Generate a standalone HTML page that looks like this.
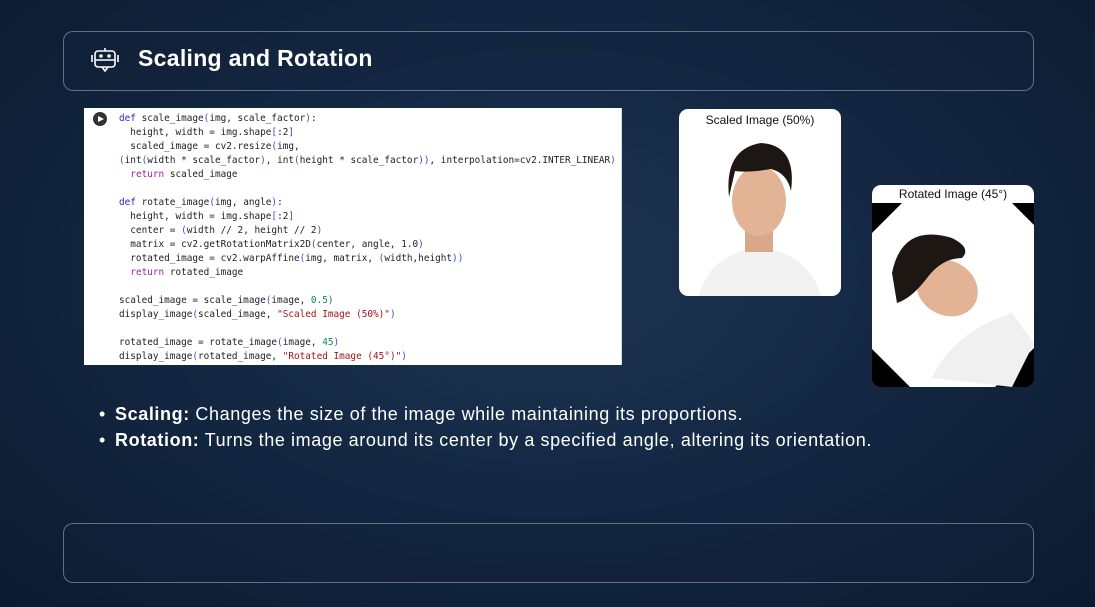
<!DOCTYPE html>
<html><head><meta charset="utf-8"><style>
*{margin:0;padding:0;box-sizing:border-box}
body{width:1095px;height:607px;overflow:hidden;font-family:"Liberation Sans",sans-serif;
background:radial-gradient(ellipse at 50% 45%,#1d3552 0%,#142844 45%,#0c1a2e 100%);position:relative}
.box{position:absolute;border:1.5px solid rgba(200,210,225,.45);border-radius:10px;background:rgba(20,35,60,.35)}
.title{position:absolute;left:138px;top:45px;color:#fff;font-weight:bold;font-size:23px;letter-spacing:.3px}
.code{position:absolute;left:84px;top:108px;width:538px;height:257px;background:#fff;border-right:1px solid #ddd;overflow:hidden}
.code pre{position:absolute;left:35px;top:4px;font-family:"DejaVu Sans Mono","Liberation Mono",monospace;font-size:9.4px;line-height:14px;color:#222}
.k{color:#2030c0}.r{color:#a020a0}.s{color:#a31515}.n{color:#098658}.p{color:#3050d0}
.play{position:absolute;left:9px;top:4px;width:14px;height:14px;border-radius:50%;background:#333}
.play:after{content:"";position:absolute;left:5px;top:3.5px;border-left:6px solid #fff;border-top:3.5px solid transparent;border-bottom:3.5px solid transparent}
.card{position:absolute;background:#fff;border-radius:9px;overflow:hidden}
.cap{position:absolute;width:100%;text-align:center;font-size:12px;color:#111}
ul{position:absolute;left:115px;top:401px;color:#fff;font-size:18px;line-height:26px;list-style:none;letter-spacing:.6px;white-space:nowrap}
li:before{content:"•";position:absolute;left:-16px}
li{position:relative}
</style></head><body>
<div class="box" style="left:63px;top:31px;width:971px;height:60px"></div>
<svg style="position:absolute;left:90px;top:47px" width="30" height="28" viewBox="0 0 30 28" fill="none" stroke="#fff" stroke-width="1.6">
<rect x="5" y="4" width="20" height="16" rx="3"/><line x1="5" y1="13" x2="25" y2="13"/><circle cx="11" cy="9" r="1" fill="#fff"/><circle cx="19" cy="9" r="1" fill="#fff"/><path d="M12 20l3 4 3-4"/><line x1="2" y1="8" x2="2" y2="15"/><line x1="28" y1="8" x2="28" y2="15"/><line x1="15" y1="1" x2="15" y2="4"/></svg>
<div class="title">Scaling and Rotation</div>
<div class="code"><div class="play"></div><pre><span class="k">def</span> scale_image<span class="p">(</span>img, scale_factor<span class="p">)</span>:
  height, width = img.shape<span class="p">[</span>:2<span class="p">]</span>
  scaled_image = cv2.resize<span class="p">(</span>img,
<span class="p">(</span>int<span class="p">(</span>width * scale_factor<span class="p">)</span>, int<span class="p">(</span>height * scale_factor<span class="p">))</span>, interpolation=cv2.INTER_LINEAR<span class="p">)</span>
  <span class="r">return</span> scaled_image

<span class="k">def</span> rotate_image<span class="p">(</span>img, angle<span class="p">)</span>:
  height, width = img.shape<span class="p">[</span>:2<span class="p">]</span>
  center = <span class="p">(</span>width // 2, height // 2<span class="p">)</span>
  matrix = cv2.getRotationMatrix2D<span class="p">(</span>center, angle, 1.0<span class="p">)</span>
  rotated_image = cv2.warpAffine<span class="p">(</span>img, matrix, <span class="p">(</span>width,height<span class="p">))</span>
  <span class="r">return</span> rotated_image

scaled_image = scale_image<span class="p">(</span>image, <span class="n">0.5</span><span class="p">)</span>
display_image<span class="p">(</span>scaled_image, <span class="s">"Scaled Image (50%)"</span><span class="p">)</span>

rotated_image = rotate_image<span class="p">(</span>image, <span class="n">45</span><span class="p">)</span>
display_image<span class="p">(</span>rotated_image, <span class="s">"Rotated Image (45°)"</span><span class="p">)</span></pre></div>

<div class="card" style="left:679px;top:109px;width:162px;height:187px">
<div class="cap" style="top:4px">Scaled Image (50%)</div>
<svg style="position:absolute;left:0;top:20px" width="162" height="167">
<path d="M20 167 Q30 125 80 118 Q130 125 142 167Z" fill="#f2f2f2"/>
<rect x="66" y="95" width="28" height="28" fill="#d9a888"/>
<ellipse cx="80" cy="72" rx="27" ry="35" fill="#e2b394"/>
<path d="M50 68 Q45 20 82 14 Q118 16 112 62 Q108 44 92 40 Q70 44 56 42Z" fill="#1e1612"/>
</svg></div>

<div class="card" style="left:872px;top:185px;width:162px;height:202px;background:#000">
<div class="cap" style="top:0;height:18px;background:#fff;line-height:18px">Rotated Image (45°)</div>
<svg style="position:absolute;left:0;top:18px" width="162" height="184">
<polygon points="30,0 140,0 162,22 162,145 123,184 38,184 0,146 0,30" fill="#fff"/>
<path d="M60 175 Q80 130 140 110 L162 140 L140 184Z" fill="#f0f0f0"/>
<ellipse cx="75" cy="85" rx="32" ry="27" transform="rotate(30 75 85)" fill="#e2b394"/>
<path d="M20 70 Q30 20 80 35 Q100 45 90 55 Q70 55 55 75 Q40 95 25 100Z" fill="#1e1612"/>
</svg></div>

<ul><li><b>Scaling:</b> Changes the size of the image while maintaining its proportions.</li>
<li><b>Rotation:</b> Turns the image around its center by a specified angle, altering its orientation.</li></ul>
<div class="box" style="left:63px;top:523px;width:971px;height:60px"></div>
</body></html>
